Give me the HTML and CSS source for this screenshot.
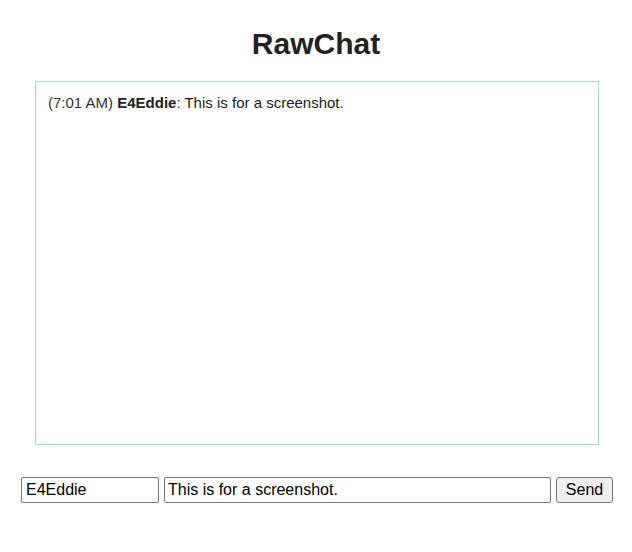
FILE: index.html
```html
<!DOCTYPE html>
<html lang="en">
<head>
<meta charset="utf-8">
<title>RawChat</title>
<link rel="stylesheet" href="styles.css">
</head>
<body>
<h1 class="title">RawChat</h1>
<div class="chat-log">
  <div class="message"><span class="time">(7:01 AM)</span> <b class="author">E4Eddie</b>: This is for a screenshot.</div>
</div>
<form class="composer">
  <input class="name-input" type="text" value="E4Eddie">
  <input class="message-input" type="text" value="This is for a screenshot.">
  <button class="send-button" type="button">Send</button>
</form>
</body>
</html>
```
FILE: styles.css
```css
html, body {
  margin: 0;
  padding: 0;
  background: #ffffff;
}
body {
  font-family: "Liberation Sans", Arial, sans-serif;
  color: #222222;
}
.title {
  margin: 27px 0 0;
  font-size: 30px;
  line-height: 34px;
  font-weight: bold;
  text-align: center;
  color: #222222;
}
.chat-log {
  box-sizing: border-box;
  width: 564px;
  height: 364px;
  margin: 20px 0 0 35px;
  border: 1px solid #a8d5ee;
  padding: 12px 12px;
  font-size: 15px;
  line-height: 17px;
  color: #222222;
}
.message .time {
  color: #333333;
}
.composer {
  display: flex;
  gap: 5px;
  margin: 32px 0 0 21px;
  width: 592px;
}
.composer input,
.composer button {
  box-sizing: border-box;
  height: 26px;
  font-family: "Liberation Sans", Arial, sans-serif;
  font-size: 16px;
  color: #000000;
  border: 1px solid #767676;
  margin: 0;
}
.name-input {
  width: 138px;
  padding: 1px 4px;
  border-radius: 2px;
}
.message-input {
  width: 388px;
  padding: 1px 4px 1px 3px;
  border-radius: 2px;
}
.send-button {
  width: 57px;
  padding: 1px 6px;
  background: #efefef;
  border-radius: 3px;
}
```
